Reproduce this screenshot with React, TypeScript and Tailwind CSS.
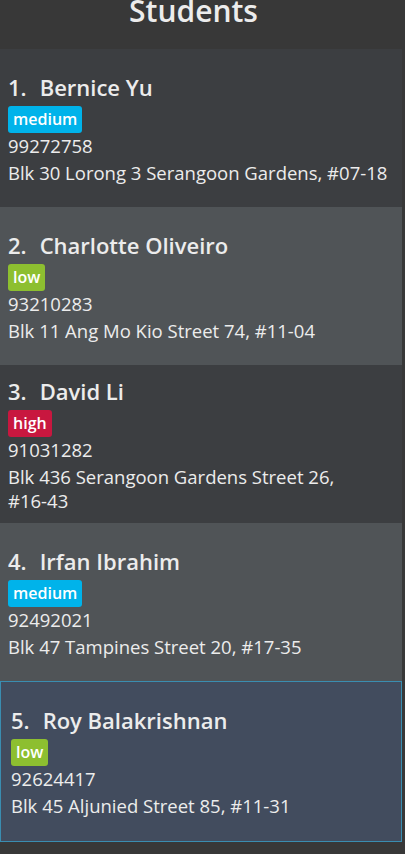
type Level = "low" | "medium" | "high"

type Student = {
    name: string
    level: Level
    phone: string
    street: string
    unit: string
}

const students: Student[] = [
    { name: "Bernice Yu", level: "medium", phone: "99272758", street: "Blk 30 Lorong 3 Serangoon Gardens,", unit: "#07-18" },
    { name: "Charlotte Oliveiro", level: "low", phone: "93210283", street: "Blk 11 Ang Mo Kio Street 74,", unit: "#11-04" },
    { name: "David Li", level: "high", phone: "91031282", street: "Blk 436 Serangoon Gardens Street 26,", unit: "#16-43" },
    { name: "Irfan Ibrahim", level: "medium", phone: "92492021", street: "Blk 47 Tampines Street 20,", unit: "#17-35" },
    { name: "Roy Balakrishnan", level: "low", phone: "92624417", street: "Blk 45 Aljunied Street 85,", unit: "#11-31" },
]

function LevelTag({ level }: { level: Level }) {
    const color =
        level === "high" ? "bg-[#c8173f]" : level === "low" ? "bg-[#8dbf30]" : "bg-[#00b3ea]"
    return (
        <span className={`${color} mt-[4px] h-[27px] self-start rounded-[3px] px-[5px] text-[16px] leading-[27px] font-semibold text-white`}>
            {level}
        </span>
    )
}

function StudentCard({ student, index, selected }: { student: Student; index: number; selected: boolean }) {
    const bg = selected
        ? "bg-[#424c5e] border border-[#3a8db0] pl-[10px] h-[161px]"
        : index % 2 === 0
            ? "bg-[#3c3e41] pl-2 h-[158px]"
            : "bg-[#505457] pl-2 h-[158px]"

    return (
        <div className={`${bg} flex w-[402px] flex-col justify-center pr-2 text-[#ececec]`}>
            {/* Name row */}
            <div className="flex gap-[13px] text-[22px] leading-[30px] font-semibold">
                <span>{index + 1}.</span>
                <span>{student.name}</span>
            </div>
            <LevelTag level={student.level} />
            <span className="mt-[1px] text-[18.5px] leading-[24px]">{student.phone}</span>
            <span className="mt-[3px] text-[18.5px] leading-[24px]">
                {student.street} <span className="whitespace-nowrap">{student.unit}</span>
            </span>
        </div>
    )
}

export default function App() {
    return (
        <div
            className="h-[854px] w-[405px] overflow-hidden bg-[#383838]"
            style={{ fontFamily: '"Open Sans", "Noto Sans", sans-serif' }}
        >
            {/* Title */}
            <header className="flex h-[49px] justify-center pr-[18px]">
                <h1 className="-mt-[9px] text-[30px] leading-[40px] font-semibold text-[#ececec]">Students</h1>
            </header>

            {/* Student list */}
            <div className="flex flex-col">
                {students.map((s, i) => (
                    <StudentCard key={s.phone} student={s} index={i} selected={i === 4} />
                ))}
            </div>
        </div>
    )
}
